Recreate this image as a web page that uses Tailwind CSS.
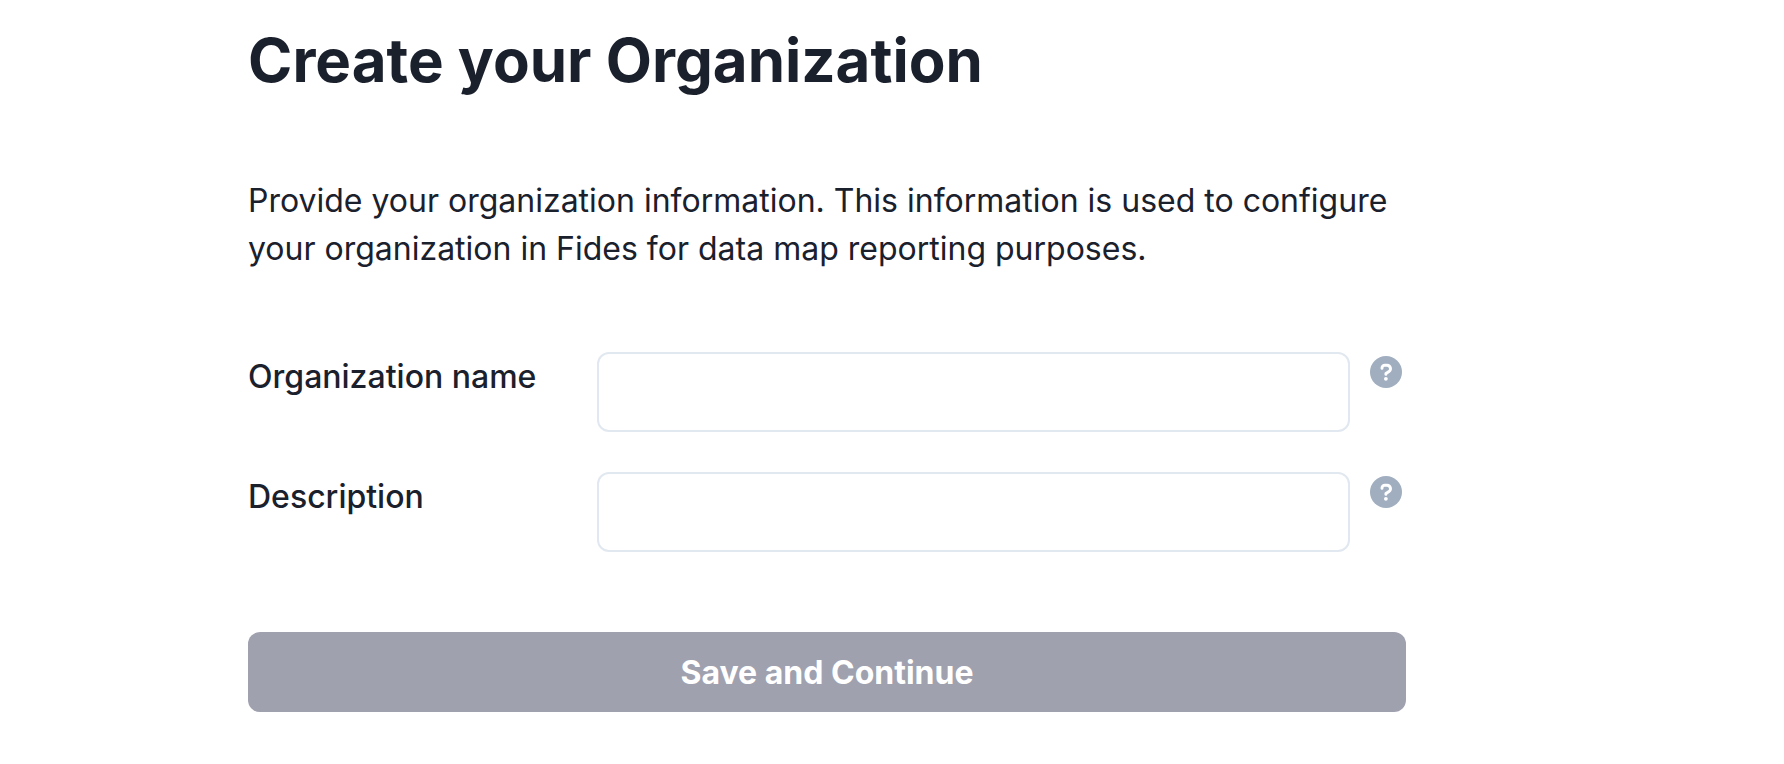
<!DOCTYPE html>
<html lang="en">
<head>
<meta charset="utf-8">
<meta name="viewport" content="width=device-width, initial-scale=1">
<title>Create your Organization</title>
<script src="https://cdn.jsdelivr.net/npm/@tailwindcss/browser@4"></script>
</head>
<body class="bg-white font-[Inter,sans-serif] text-[#1a202c]">
<main class="ml-[248px] w-[65%] max-w-[1158px] pt-6 pb-10">
  <h1 class="text-[60px] leading-[72px] font-bold">Create your Organization</h1>
  <p class="mt-[81px] text-[32px] leading-[48px]">Provide your organization information. This information is used to configure your organization in Fides for data map reporting purposes.</p>
  <form class="mt-[79px] flex flex-col">
    <div class="flex items-start">
      <label for="name" class="w-[349px] shrink-0 text-[32px] leading-[50px] font-medium">Organization name</label>
      <input id="name" type="text" class="h-20 min-w-0 flex-1 rounded-xl border-2 border-[#e2e8f0] px-6 text-[32px]">
      <button type="button" aria-label="Organization name help" class="mt-1 mr-1 ml-5 size-8 shrink-0">
        <svg viewBox="0 0 32 32" class="size-8" fill="none"><circle cx="16" cy="16" r="16" fill="#a0aec0"/><path d="M12 12.4V12a2.7 2.7 0 0 1 2.7-2.7h2.5a3.4 3.4 0 0 1 1.8 6.2l-3.1 2v.9" stroke="#fff" stroke-width="2.9" stroke-linecap="round" stroke-linejoin="round"/><circle cx="15.9" cy="22.8" r="1.9" fill="#fff"/></svg>
      </button>
    </div>
    <div class="mt-10 flex items-start">
      <label for="description" class="w-[349px] shrink-0 text-[32px] leading-[50px] font-medium">Description</label>
      <input id="description" type="text" class="h-20 min-w-0 flex-1 rounded-xl border-2 border-[#e2e8f0] px-6 text-[32px]">
      <button type="button" aria-label="Description help" class="mt-1 mr-1 ml-5 size-8 shrink-0">
        <svg viewBox="0 0 32 32" class="size-8" fill="none"><circle cx="16" cy="16" r="16" fill="#a0aec0"/><path d="M12 12.4V12a2.7 2.7 0 0 1 2.7-2.7h2.5a3.4 3.4 0 0 1 1.8 6.2l-3.1 2v.9" stroke="#fff" stroke-width="2.9" stroke-linecap="round" stroke-linejoin="round"/><circle cx="15.9" cy="22.8" r="1.9" fill="#fff"/></svg>
      </button>
    </div>
    <button type="submit" class="mt-20 h-20 w-full rounded-xl bg-[#a0a1af] pt-0.5 text-[32px] leading-[48px] font-bold text-white">Save and Continue</button>
  </form>
</main>
</body>
</html>
